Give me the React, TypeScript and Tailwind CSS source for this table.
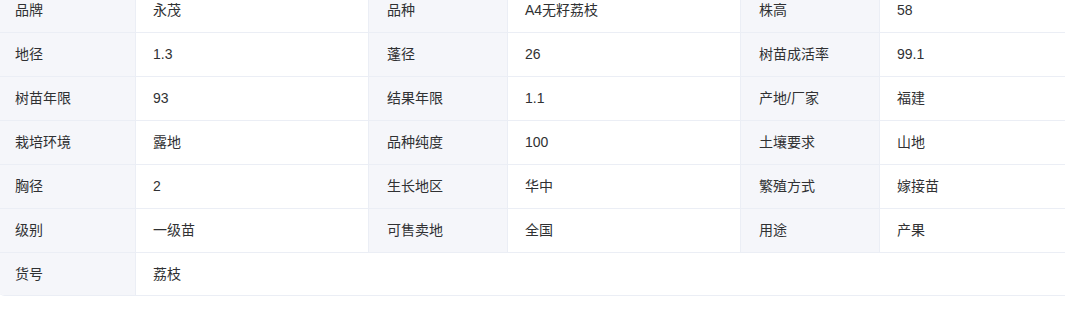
import React from "react";

type Item = { label: string; value: string };

const rows: Item[][] = [
  [
    { label: "品牌", value: "永茂" },
    { label: "品种", value: "A4无籽荔枝" },
    { label: "株高", value: "58" },
  ],
  [
    { label: "地径", value: "1.3" },
    { label: "蓬径", value: "26" },
    { label: "树苗成活率", value: "99.1" },
  ],
  [
    { label: "树苗年限", value: "93" },
    { label: "结果年限", value: "1.1" },
    { label: "产地/厂家", value: "福建" },
  ],
  [
    { label: "栽培环境", value: "露地" },
    { label: "品种纯度", value: "100" },
    { label: "土壤要求", value: "山地" },
  ],
  [
    { label: "胸径", value: "2" },
    { label: "生长地区", value: "华中" },
    { label: "繁殖方式", value: "嫁接苗" },
  ],
  [
    { label: "级别", value: "一级苗" },
    { label: "可售卖地", value: "全国" },
    { label: "用途", value: "产果" },
  ],
];

const labelCls =
  "h-[44px] flex items-center px-[18px] bg-[#f5f6fa] border-r border-b border-[#ebeef5]";
const valueCls =
  "h-[44px] flex items-center px-[17px] bg-white border-r border-b border-[#ebeef5]";

export default function App() {
  return (
    <div
      className="w-screen h-[311px] overflow-hidden bg-white text-[14px] text-[#303133]"
      style={{ fontFamily: '"Liberation Sans", "Noto Sans CJK SC", sans-serif' }}
    >
      <div className="-mt-[11px] -ml-[3px] w-[1116px] rounded-b-lg overflow-hidden border-b border-[#ebeef5]">
        <div className="grid grid-cols-[139px_233px_139px_233px_139px_233px]">
          {rows.map((row, i) =>
            row.map((item, j) => (
              <React.Fragment key={`${i}-${j}`}>
                <div className={labelCls}>{item.label}</div>
                <div className={valueCls}>{item.value}</div>
              </React.Fragment>
            ))
          )}
          <div className="h-[42px] flex items-center px-[18px] bg-[#f5f6fa] border-r border-[#ebeef5]">
            货号
          </div>
          <div className="col-span-5 h-[42px] flex items-center px-[17px] bg-white">
            荔枝
          </div>
        </div>
      </div>
    </div>
  );
}
